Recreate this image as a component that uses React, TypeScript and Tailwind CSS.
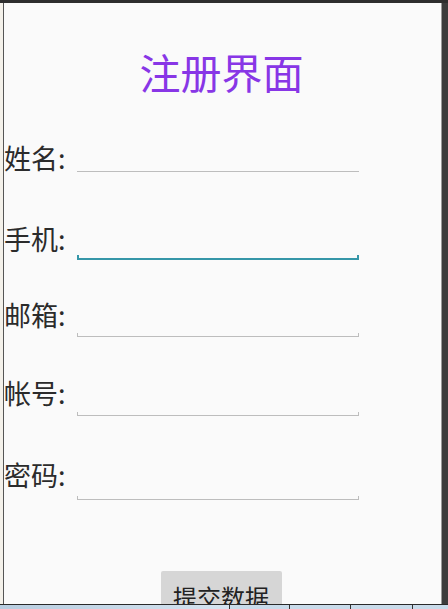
import React from 'react';

const font = { fontFamily: '"Noto Sans CJK SC", "Noto Sans", sans-serif' };

type Field = { label: string; rowH: string; boxH: string; focused?: boolean };

const fields: Field[] = [
  { label: '姓名:', rowH: 'h-[81px]', boxH: 'h-[30px]' },
  { label: '手机:', rowH: 'h-[76px]', boxH: 'h-[37px]', focused: true },
  { label: '邮箱:', rowH: 'h-[78px]', boxH: 'h-[38px]' },
  { label: '帐号:', rowH: 'h-[82px]', boxH: 'h-[39px]' },
  { label: '密码:', rowH: 'h-[112px]', boxH: 'h-[41px]' },
];

const EditLine: React.FC<{ focused?: boolean; boxH: string }> = ({ focused, boxH }) => (
  <div className={`ml-[9px] w-[282px] ${boxH} flex flex-col justify-end`}>
    <input
      className="w-full flex-1 bg-transparent outline-none text-[20px] text-[#333]"
      style={font}
      autoFocus={focused}
    />
    {focused ? (
      <div className="h-[5px] border-x-2 border-b-2 border-[#3596a8]" />
    ) : (
      <div className="h-[4px] border-x border-b border-[#bdbdbd]" />
    )}
  </div>
);

const App: React.FC = () => {
  return (
    <div className="w-[448px] h-[609px] overflow-hidden flex flex-col bg-[#3a3a3a]" style={font}>
      <div className="h-[3px] bg-[#2e2e2e]" />
      <div className="flex-1 flex min-h-0">
        <div className="w-[3px] bg-[#f4f1ea]" />
        <div className="w-px bg-[#555]" />
        <div className="flex-1 bg-[#fafafa] flex flex-col">
          <h1 className="mt-[44px] text-center text-[41px] leading-[48px] text-[#8836e6] pr-[2px]">注册界面</h1>
          <div className="mt-[47px] flex flex-col">
            {fields.map((f) => (
              <div key={f.label} className={`flex items-start ${f.rowH}`}>
                <label className="text-[27px] leading-[32px] text-[#2b2b2b] w-[64px]">{f.label}</label>
                <EditLine focused={f.focused} boxH={f.boxH} />
              </div>
            ))}
          </div>
          <div className="flex justify-center pr-[3px]">
            <button className="w-[121px] h-[48px] bg-[#d6d6d6] rounded-t-[2px] text-[24px] leading-none text-[#222] pt-[14px] flex justify-center items-start">
              提交数据
            </button>
          </div>
        </div>
        <div className="w-px bg-[#9a9a9a]" />
        <div className="w-[6px] bg-[#3c3c3c]" />
      </div>
      <div className="h-px bg-[#2a2a2a]" />
      <div className="h-[4px] flex bg-[#c9dbea]">
        <div className="w-[229px] bg-gradient-to-r from-[#b8cde0] to-[#d6e4f0]" />
        <div className="w-[60px] border-l border-[#333]" />
        <div className="w-[61px] border-l border-[#333]" />
        <div className="w-[62px] border-l border-[#333]" />
        <div className="flex-1 border-l border-[#333]" />
      </div>
    </div>
  );
};

export default App;
